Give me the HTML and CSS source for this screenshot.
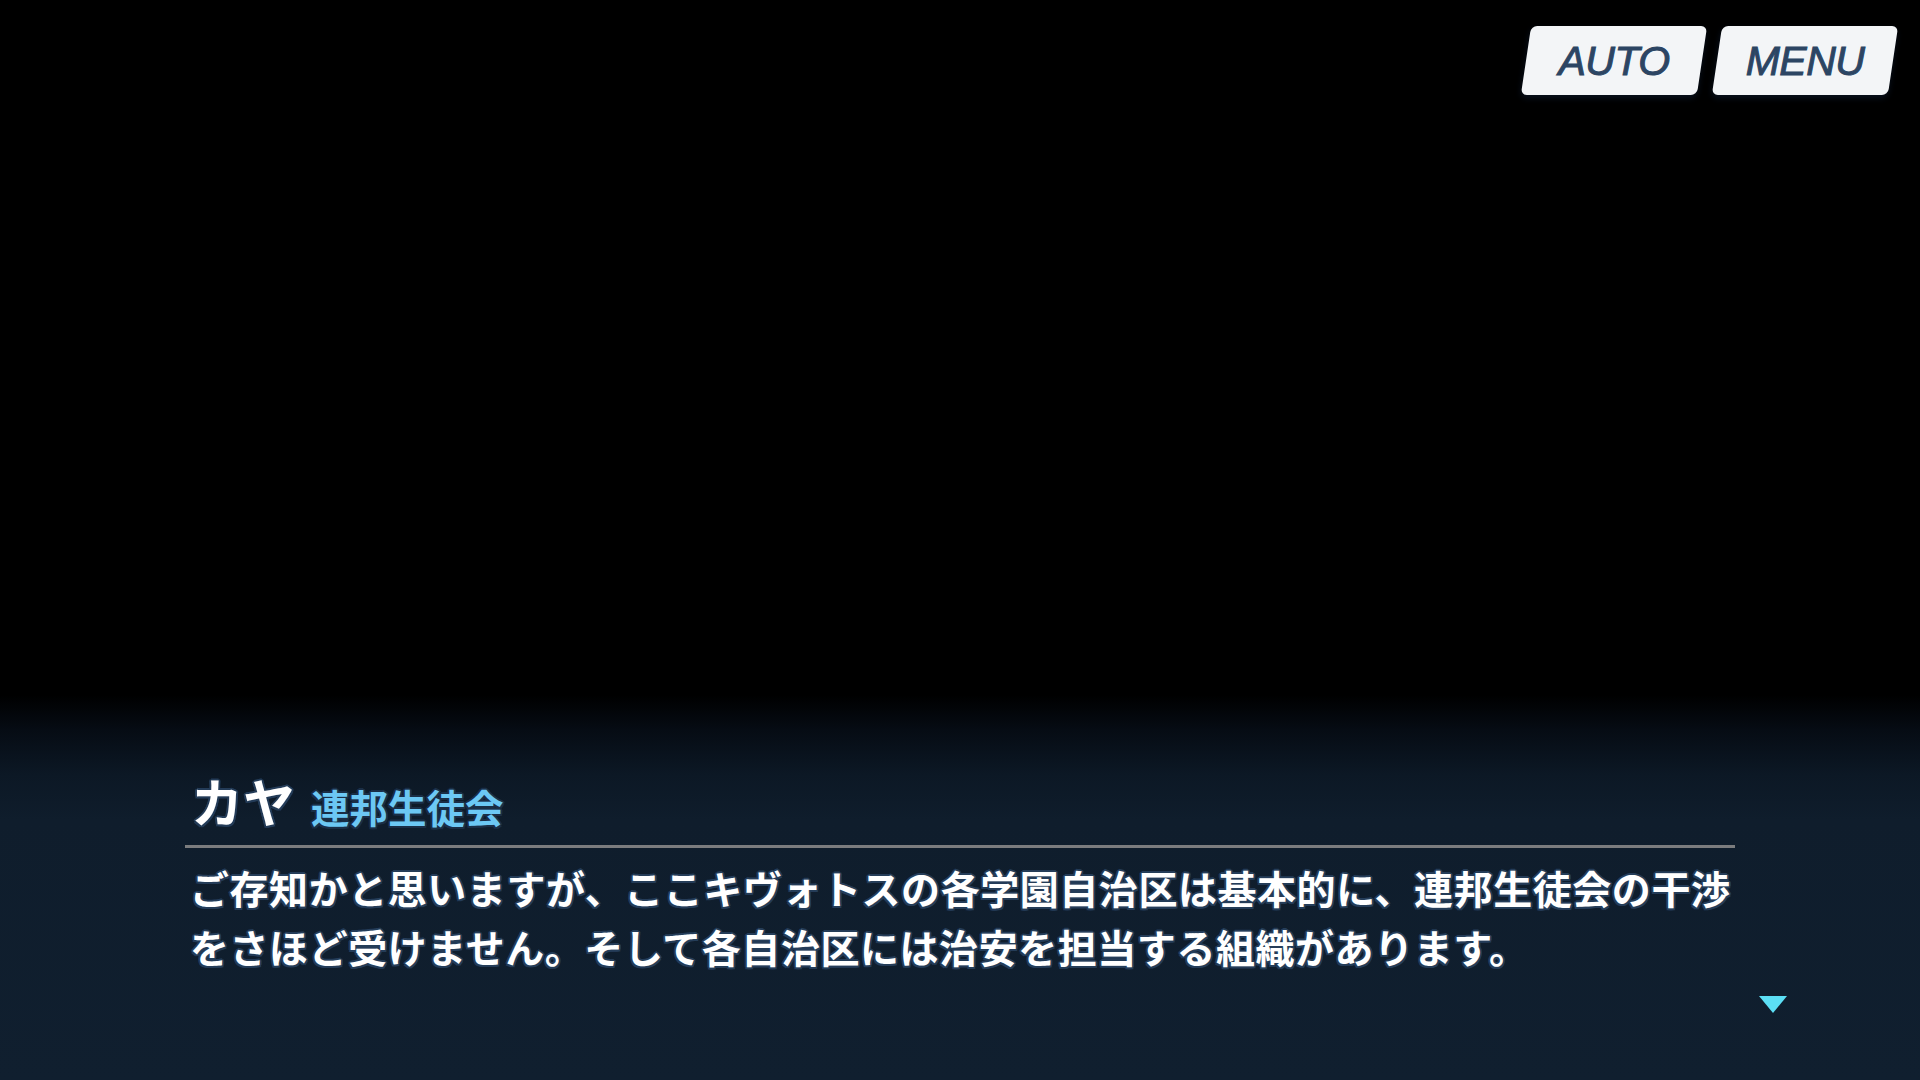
FILE: index.html
```html
<!DOCTYPE html>
<html lang="ja">
<head>
<meta charset="utf-8">
<title>Dialogue</title>
<link rel="stylesheet" href="styles.css">
</head>
<body>
<div class="screen">
  <div class="topbar">
    <div class="btn"><span>AUTO</span></div>
    <div class="btn"><span>MENU</span></div>
  </div>
  <div class="dialog">
    <div class="speaker">
      <span class="name">カヤ</span>
      <span class="org">連邦生徒会</span>
    </div>
    <div class="rule"></div>
    <p class="text">ご存知かと思いますが、ここキヴォトスの各学園自治区は基本的に、連邦生徒会の干渉<br>をさほど受けません。そして各自治区には治安を担当する組織があります。</p>
    <div class="next"></div>
  </div>
</div>
</body>
</html>
```

FILE: styles.css
```css
html, body {
  margin: 0;
  padding: 0;
}
body {
  width: 1920px;
  height: 1080px;
  overflow: hidden;
  background: #000;
}
.screen {
  width: 1920px;
  height: 1080px;
  display: flex;
  flex-direction: column;
  background: linear-gradient(to bottom, #000 0px, #000 695px, #060c14 730px, #0c1825 775px, #0f1d2c 820px, #101f2f 1080px);
  font-family: "Noto Sans CJK JP", "Noto Sans", sans-serif;
}
.topbar {
  display: flex;
  justify-content: flex-end;
  gap: 15px;
  padding: 26px 27px 0 0;
}
.btn {
  position: relative;
  width: 176px;
  height: 69px;
  display: flex;
  align-items: center;
  justify-content: center;
}
.btn::before {
  content: "";
  position: absolute;
  inset: 0;
  background: #f3f5f7;
  border-radius: 6px;
  transform: skewX(-8.5deg);
  box-shadow: 0 3px 6px rgba(20, 40, 70, 0.45);
}
.btn span {
  position: relative;
  font-family: "Liberation Sans", Arial, sans-serif;
  font-style: italic;
  font-size: 41px;
  color: #2c4563;
  -webkit-text-stroke: 1px #2c4563;
  letter-spacing: -0.5px;
  padding-top: 2px;
}
.dialog {
  position: relative;
  margin-top: auto;
  margin-left: 185px;
  width: 1550px;
  padding-bottom: 104px;
}
.speaker {
  display: flex;
  align-items: baseline;
  gap: 16px;
  padding-left: 6px;
  line-height: 1;
}
.name {
  font-size: 52px;
  font-weight: 700;
  color: #ffffff;
  text-shadow: 0 0 2px #243c58, 2px 0 0 #243c58, -2px 0 0 #243c58, 0 2px 0 #243c58, 0 -2px 0 #243c58, 1.5px 1.5px 0 #243c58, -1.5px 1.5px 0 #243c58, 1.5px -1.5px 0 #243c58, -1.5px -1.5px 0 #243c58;
}
.org {
  font-size: 38.5px;
  font-weight: 700;
  color: #6cc8f4;
  text-shadow: 0 0 2px #1b2f47, 2px 0 0 #1b2f47, -2px 0 0 #1b2f47, 0 2px 0 #1b2f47, 0 -2px 0 #1b2f47, 1.5px 1.5px 0 #1b2f47, -1.5px 1.5px 0 #1b2f47, 1.5px -1.5px 0 #1b2f47, -1.5px -1.5px 0 #1b2f47;
}
.rule {
  height: 3px;
  background: #7b7c7e;
  margin-top: 18px;
}
.text {
  margin: 10px 0 0 0;
  padding-left: 5px;
  font-size: 39px;
  letter-spacing: 0.55px;
  line-height: 59px;
  font-weight: 700;
  color: #ffffff;
  white-space: nowrap;
  text-shadow: 0 0 2px #253d59, 2px 0 0 #253d59, -2px 0 0 #253d59, 0 2px 0 #253d59, 0 -2px 0 #253d59, 1.5px 1.5px 0 #253d59, -1.5px 1.5px 0 #253d59, 1.5px -1.5px 0 #253d59, -1.5px -1.5px 0 #253d59;
}
.next {
  position: absolute;
  left: 1574px;
  bottom: 67px;
  width: 0;
  height: 0;
  border-left: 14.5px solid transparent;
  border-right: 14.5px solid transparent;
  border-top: 17px solid #5cdff5;
}
```
